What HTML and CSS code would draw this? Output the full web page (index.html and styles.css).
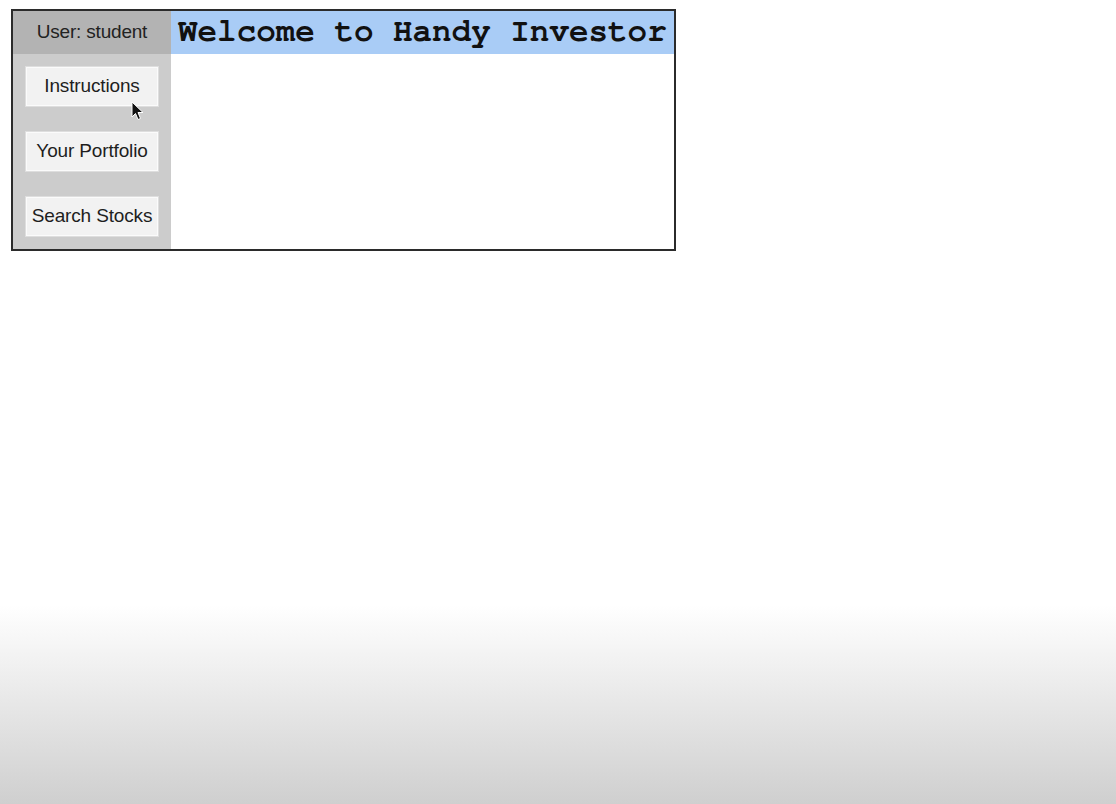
FILE: index.html
```html
<!DOCTYPE html>
<html lang="en">
<head>
<meta charset="utf-8">
<title>Handy Investor</title>
<link rel="stylesheet" href="styles.css">
</head>
<body>
<div class="app">
  <div class="user">User: student</div>
  <h1 class="title">Welcome to Handy Investor</h1>
  <nav class="side">
    <button class="btn btn-hover">Instructions
      <svg class="cursor" width="14" height="20" viewBox="0 0 14 20"><path d="M1 1 L1 16 L4.5 12.5 L7 18.5 L9.5 17.5 L7 11.5 L12 11.5 Z" fill="#111" stroke="#fff" stroke-width="1"/></svg>
    </button>
    <button class="btn">Your Portfolio</button>
    <button class="btn">Search Stocks</button>
  </nav>
  <main class="content"></main>
</div>
</body>
</html>
```

FILE: styles.css
```css
html {
  height: 100%;
  background: linear-gradient(to bottom, #ffffff 0, #ffffff 605px, #cfcfcf 804px);
}
body {
  margin: 0;
  padding: 9px 0 0 11px;
  font-family: "Liberation Sans", Arial, sans-serif;
}
.app {
  width: 661px;
  height: 238px;
  border: 2px solid #2b2b2b;
  display: grid;
  grid-template-columns: 158px 1fr;
  grid-template-rows: 43px 1fr;
  background: #fff;
}
.user {
  background: #b3b3b3;
  color: #222;
  font-size: 19px;
  display: flex;
  align-items: center;
  justify-content: center;
  padding-bottom: 2px;
  letter-spacing: -0.2px;
}
.title {
  margin: 0;
  background: #a9ccf6;
  font-family: "Nimbus Mono PS", "Nimbus Mono L", "FreeMono", "Courier New", "Liberation Mono", monospace;
  font-weight: bold;
  font-size: 32.6px;
  color: #111;
  display: flex;
  align-items: center;
  padding-left: 7px;
  padding-bottom: 3px;
  white-space: nowrap;
  overflow: hidden;
}
.side {
  background: #cccccc;
  display: flex;
  flex-direction: column;
  align-items: center;
  gap: 26px;
  padding-top: 13px;
}
.btn {
  position: relative;
  width: 132px;
  height: 39px;
  background: #f2f2f2;
  border: 1px solid #fbfbfb;
  outline: 1px solid #dedede;
  font-family: "Liberation Sans", Arial, sans-serif;
  font-size: 19px;
  color: #1e1e1e;
  padding: 0 0 2px;
  letter-spacing: -0.15px;
}
.cursor {
  position: absolute;
  left: 104px;
  top: 33px;
}
.content {
  background: #fff;
}
```
